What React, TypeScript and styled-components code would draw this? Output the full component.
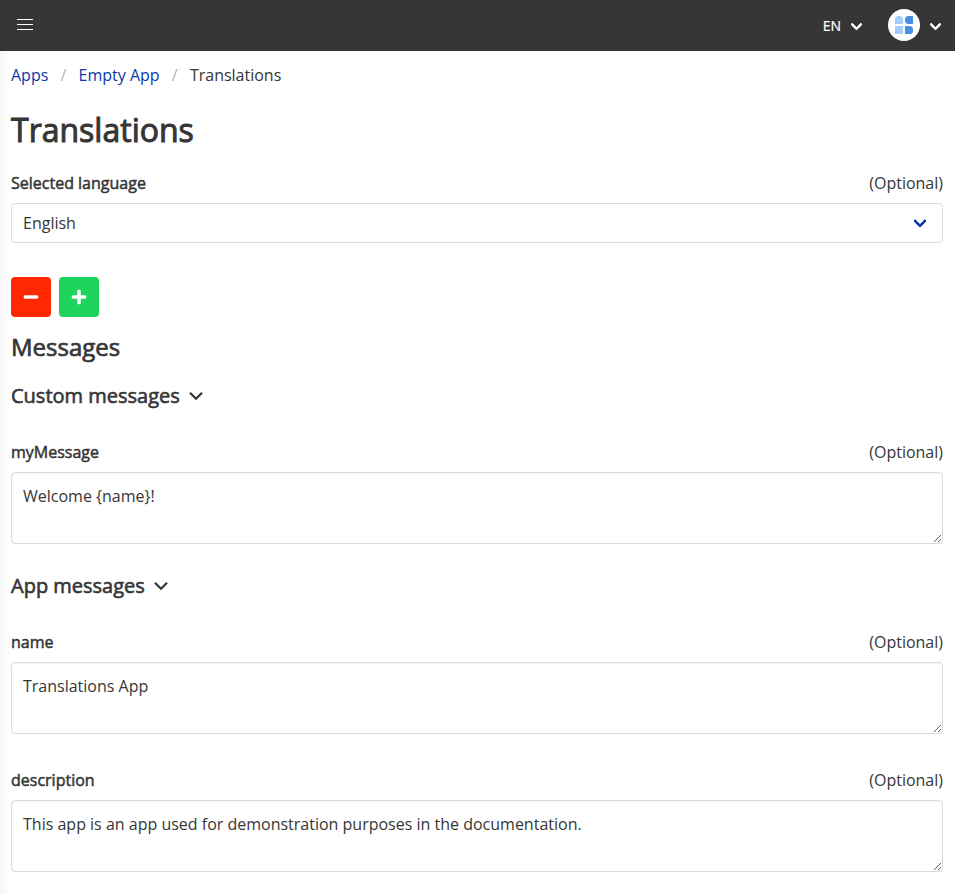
import React from 'react';
import styled, { createGlobalStyle } from 'styled-components';
import { FaMinus, FaPlus } from 'react-icons/fa';

const GlobalStyle = createGlobalStyle`
  *, *::before, *::after { box-sizing: border-box; }
  html, body { margin: 0; background: #fff; }
  body {
    height: 894px;
    overflow: hidden;
    color: #363636;
    font: 400 16px/24px 'Open Sans', sans-serif;
  }
  h1, h2, h3, ol { margin: 0; padding: 0; font-weight: 400; }
`;

const Navbar = styled.nav`
  display: flex;
  align-items: center;
  justify-content: space-between;
  height: 51px;
  padding: 0 14px 0 17px;
  background: #363636;
  color: #fff;
`;

const Burger = styled.button`
  display: flex;
  flex-direction: column;
  gap: 4px;
  width: 16px;
  padding: 0;
  margin-bottom: 2px;
  border: 0;
  background: none;
`;

const BurgerLine = styled.span`
  height: 1px;
  background: #fff;
`;

const NavEnd = styled.div`
  display: flex;
  align-items: center;
`;

const Language = styled.span`
  margin-right: 10px;
  font-size: 14px;
  -webkit-text-stroke: 0.2px #fff;
`;

const Avatar = styled.span`
  display: flex;
  align-items: center;
  justify-content: center;
  width: 32px;
  height: 32px;
  margin: 0 10px 2px 26px;
  border-radius: 50%;
  background: #fff;
`;

const Arrow = styled.span<{ $color: string; $size: number }>`
  flex: none;
  width: ${(p) => p.$size}px;
  height: ${(p) => p.$size}px;
  margin: -5px 1px 0;
  border: 3px solid ${(p) => p.$color};
  border-top: 0;
  border-right: 0;
  border-radius: 2px;
  transform: rotate(-45deg);
`;

const NavArrow = styled(Arrow)`
  margin-top: -3px;
`;

const Page = styled.main`
  height: 843px;
  padding: 12px 12px 0 11px;
  background: linear-gradient(90deg, #f7f7f7, #fff 11px);
`;

const Breadcrumb = styled.ol`
  display: flex;
  list-style: none;
`;

const Crumb = styled.li<{ $link?: boolean }>`
  color: ${(p) => (p.$link ? '#0a39a8' : '#363636')};

  &:not(:first-child)::before {
    content: '/';
    margin: 0 12.2px;
    color: #b5b5b5;
  }
`;

const Title = styled.h1`
  margin-top: 25px;
  font-size: 32px;
  line-height: 36px;
  -webkit-text-stroke: 1px #363636;
`;

const Subtitle = styled.h2`
  margin-top: 16px;
  font-size: 24px;
  line-height: 28px;
  -webkit-text-stroke: 0.7px #363636;
`;

const SectionTitle = styled.h3<{ $top: number }>`
  display: flex;
  align-items: center;
  gap: 9.5px;
  margin-top: ${(p) => p.$top}px;
  font-size: 20px;
  line-height: 24px;
  -webkit-text-stroke: 0.6px #363636;
`;

const Field = styled.div<{ $top: number }>`
  margin-top: ${(p) => p.$top}px;
`;

const FieldHeader = styled.div`
  display: flex;
  justify-content: space-between;
  margin-bottom: 8px;
`;

const Label = styled.label`
  -webkit-text-stroke: 0.5px #363636;
`;

const Select = styled.div`
  display: flex;
  align-items: center;
  justify-content: space-between;
  height: 40px;
  padding: 0 16px 0 11px;
  border: 1px solid #dbdbdb;
  border-radius: 4px;
  background: #fff;
`;

const TextArea = styled.textarea`
  display: block;
  width: 100%;
  height: 72px;
  padding: 11px;
  border: 1px solid #dbdbdb;
  border-radius: 4px;
  outline: 0;
  background: #fff;
  box-shadow: inset 0 1px 2px rgba(10, 10, 10, 0.05);
  color: #363636;
  font: inherit;
  resize: vertical;
  overflow: hidden;
`;

const Buttons = styled.div`
  display: flex;
  gap: 8px;
  margin-top: 34px;
`;

const IconButton = styled.button<{ $color: string }>`
  display: flex;
  align-items: center;
  justify-content: center;
  width: 40px;
  height: 40px;
  padding: 0;
  border: 0;
  border-radius: 4px;
  background: ${(p) => p.$color};
  color: #fff;
  font-size: 16px;

  path {
    stroke: #fff;
    stroke-width: 16px;
  }
`;

function Logo() {
  return (
    <svg width="18" height="18" viewBox="0 0 18 18">
      <path d="M0 8.1V3.6A3.6 3.6 0 0 1 3.6 0H4.5A3.6 3.6 0 0 1 8.1 3.6V8.1Z" fill="#a3ccff" />
      <path d="M18 0V8.1H13.6A3.6 3.6 0 0 1 10 4.5V3.6A3.6 3.6 0 0 1 13.6 0Z" fill="#4a90e2" />
      <path d="M0 10H8.1V18H0Z" fill="#a3ccff" />
      <path d="M10 10H14.4A3.6 3.6 0 0 1 18 13.6V14.4A3.6 3.6 0 0 1 14.4 18H10Z" fill="#4a90e2" />
    </svg>
  );
}

function Chevron() {
  return (
    <svg width="14" height="16" viewBox="0 0 14 16" fill="none">
      <path d="M1 4.7L7 10.7L13 4.7" stroke="#363636" strokeWidth="2.3" />
    </svg>
  );
}

function OptionalHeader({ label }: { label: string }) {
  return (
    <FieldHeader>
      <Label>{label}</Label>
      <span>(Optional)</span>
    </FieldHeader>
  );
}

function Message({ label, value, top }: { label: string; value: string; top: number }) {
  return (
    <Field $top={top}>
      <OptionalHeader label={label} />
      <TextArea defaultValue={value} spellCheck={false} />
    </Field>
  );
}

export default function App() {
  return (
    <>
      <GlobalStyle />
      <Navbar>
        <Burger aria-label="Menu">
          <BurgerLine />
          <BurgerLine />
          <BurgerLine />
        </Burger>
        <NavEnd>
          <Language>EN</Language>
          <NavArrow $color="#fff" $size={9} />
          <Avatar>
            <Logo />
          </Avatar>
          <NavArrow $color="#fff" $size={9} />
        </NavEnd>
      </Navbar>
      <Page>
        <Breadcrumb>
          <Crumb $link>Apps</Crumb>
          <Crumb $link>Empty App</Crumb>
          <Crumb>Translations</Crumb>
        </Breadcrumb>
        <Title>Translations</Title>
        <Field $top={23}>
          <OptionalHeader label="Selected language" />
          <Select>
            English
            <Arrow $color="#0a39a8" $size={10} />
          </Select>
        </Field>
        <Buttons>
          <IconButton $color="#ff2800" aria-label="Remove language">
            <FaMinus />
          </IconButton>
          <IconButton $color="#1fd45c" aria-label="Add language">
            <FaPlus />
          </IconButton>
        </Buttons>
        <Subtitle>Messages</Subtitle>
        <SectionTitle $top={23}>
          Custom messages <Chevron />
        </SectionTitle>
        <Message top={32} label="myMessage" value="Welcome {name}!" />
        <SectionTitle $top={30}>
          App messages <Chevron />
        </SectionTitle>
        <Message top={32} label="name" value="Translations App" />
        <Message
          top={34}
          label="description"
          value="This app is an app used for demonstration purposes in the documentation."
        />
      </Page>
    </>
  );
}
